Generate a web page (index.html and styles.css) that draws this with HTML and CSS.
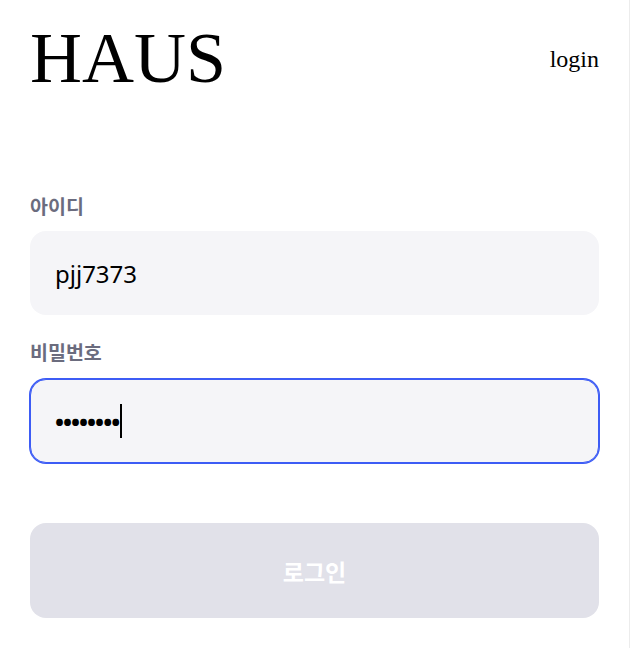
FILE: index.html
```html
<!DOCTYPE html>
<html lang="ko">
<head>
<meta charset="utf-8">
<title>HAUS 로그인</title>
<link rel="stylesheet" href="styles.css">
</head>
<body>
<div class="page">
  <header class="header">
    <h1 class="logo">HAUS</h1>
    <a class="login-link">login</a>
  </header>
  <form class="form">
    <label class="label">아이디</label>
    <div class="field"><span class="value">pjj7373</span></div>
    <label class="label label--second">비밀번호</label>
    <div class="field field--focus"><span class="value value--dots">••••••••</span><span class="caret"></span></div>
    <button type="button" class="submit">로그인</button>
  </form>
</div>
</body>
</html>
```
FILE: styles.css
```css
* { box-sizing: border-box; }
html, body { margin: 0; padding: 0; background: #fff; }
.page {
  width: 630px;
  min-height: 648px;
  border-right: 1px solid #ececec;
  padding: 17px 30px 0 30px;
}
.header {
  display: flex;
  justify-content: space-between;
  align-items: center;
}
.logo {
  margin: 0;
  font-family: "Liberation Serif", serif;
  font-weight: 400;
  font-size: 72px;
  line-height: normal;
  color: #000;
}
.login-link {
  font-family: "Liberation Serif", serif;
  font-size: 24px;
  color: #000;
  margin-top: 2px;
}
.form {
  display: flex;
  flex-direction: column;
  margin-top: 93px;
}
.label {
  font-family: "Noto Sans CJK KR", sans-serif;
  font-weight: 700;
  font-size: 19.5px;
  line-height: 26px;
  color: #6b6c7e;
  margin-bottom: 12px;
}
.label--second { margin-top: 24px; margin-bottom: 14px; }
.field {
  height: 84px;
  border-radius: 16px;
  background: #f5f5f8;
  border: 1px solid transparent;
  padding: 0 24px;
  display: flex;
  align-items: center;
  font-family: "Noto Sans", "Noto Sans CJK KR", sans-serif;
  font-size: 24px;
  color: #000;
}
.field--focus {
  border-color: #3d5cf5;
  box-shadow: 0 0 0 1px #3d5cf5;
}
.value--dots { letter-spacing: -1px; font-weight: 700; }
.caret {
  display: inline-block;
  width: 2px;
  height: 34px;
  background: #000;
  margin-left: 1px;
}
.submit {
  margin-top: 60px;
  height: 95px;
  border: none;
  border-radius: 16px;
  background: #e1e1e9;
  color: #fff;
  font-family: "Noto Sans CJK KR", sans-serif;
  font-weight: 700;
  font-size: 23px;
}
```
